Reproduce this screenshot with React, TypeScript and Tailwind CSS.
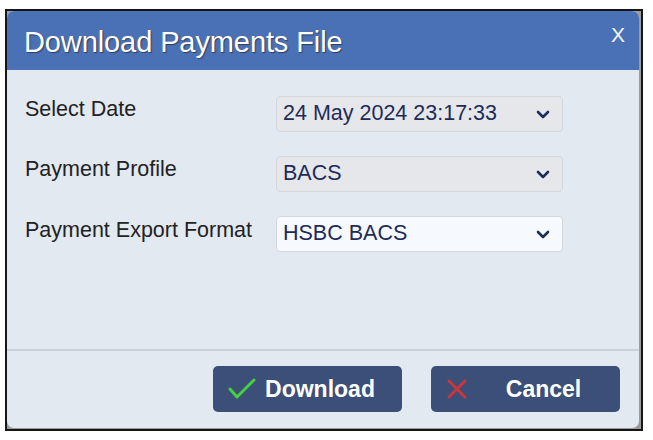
import React from "react";

const Chevron = () => (
  <svg width="14" height="9" viewBox="0 0 14 9" className="shrink-0">
    <polyline points="2,2 7,7 12,2" fill="none" stroke="#1f2d5a" strokeWidth="2.6" strokeLinecap="round" strokeLinejoin="round" />
  </svg>
);

function SelectBox({ value, white }: { value: string; white?: boolean }) {
  return (
    <div
      className={`w-[287px] h-[36px] rounded-[4px] border border-[#d3d7dc] flex items-center justify-between pl-[6px] pr-[12px] ${
        white ? "bg-[#f6faff]" : "bg-[#e5e7ea]"
      }`}
    >
      <span className="text-[21.5px] leading-none text-[#1e2b58]">{value}</span>
      <Chevron />
    </div>
  );
}

export default function App() {
  return (
    <div className="w-[653px] h-[440px] bg-white pt-[9px] pl-[5px]" style={{ fontFamily: '"Liberation Sans", Arial, sans-serif' }}>
      <div className="w-[638px] h-[422px] border-2 border-[#151515] bg-[#9c9c9c] flex flex-col">
        <div className="flex-1 mr-[2px] mb-[1px] rounded-[7px] overflow-hidden flex flex-col bg-[#e2e9f1]">
          {/* Header */}
          <div className="h-[59px] bg-[#4a71b5] flex items-start justify-between pl-[17px] pr-[14px]">
            <div
              className="text-[29px] leading-none text-white mt-[17px] tracking-[-0.1px]"
              style={{ textShadow: "1px 1px 1px rgba(40,40,60,0.7)" }}
            >
              Download Payments File
            </div>
            <div className="text-[21px] leading-none text-[#f4f6fb] mt-[13px]">X</div>
          </div>
          {/* Body */}
          <div className="h-[279px] flex flex-col gap-[24px] pt-[26px] pl-[18px]">
            <div className="flex items-start">
              <div className="w-[251px] text-[21.5px] leading-[24px] text-[#222] pt-[1px]">Select Date</div>
              <SelectBox value="24 May 2024 23:17:33" />
            </div>
            <div className="flex items-start">
              <div className="w-[251px] text-[21.5px] leading-[24px] text-[#222] pt-[1px]">Payment Profile</div>
              <SelectBox value="BACS" />
            </div>
            <div className="flex items-start">
              <div className="w-[251px] text-[21.5px] leading-[24px] text-[#222] pt-[2px]">Payment Export Format</div>
              <SelectBox value="HSBC BACS" white />
            </div>
          </div>
          <div className="h-[2px] bg-[#cbd2da]" />
          {/* Footer */}
          <div className="flex justify-end gap-[29px] pt-[15px] pr-[19px]">
            <button className="w-[189px] h-[46px] rounded-[5px] bg-[#3b4f78] flex items-center pl-[15px]">
              <svg width="28" height="22" viewBox="0 0 28 22" className="shrink-0">
                <polyline points="2,11 9,19 26,2" fill="none" stroke="#45d13f" strokeWidth="3" strokeLinecap="round" strokeLinejoin="round" />
              </svg>
              <span className="flex-1 text-center text-[23px] font-bold text-white leading-none pr-[18px]">Download</span>
            </button>
            <button className="w-[189px] h-[46px] rounded-[5px] bg-[#3b4f78] flex items-center pl-[16px]">
              <svg width="20" height="20" viewBox="0 0 20 20" className="shrink-0">
                <path d="M2 2 L18 18 M18 2 L2 18" fill="none" stroke="#c9363c" strokeWidth="3" strokeLinecap="round" />
              </svg>
              <span className="flex-1 text-center text-[23px] font-bold text-white leading-none">Cancel</span>
            </button>
          </div>
        </div>
      </div>
    </div>
  );
}
